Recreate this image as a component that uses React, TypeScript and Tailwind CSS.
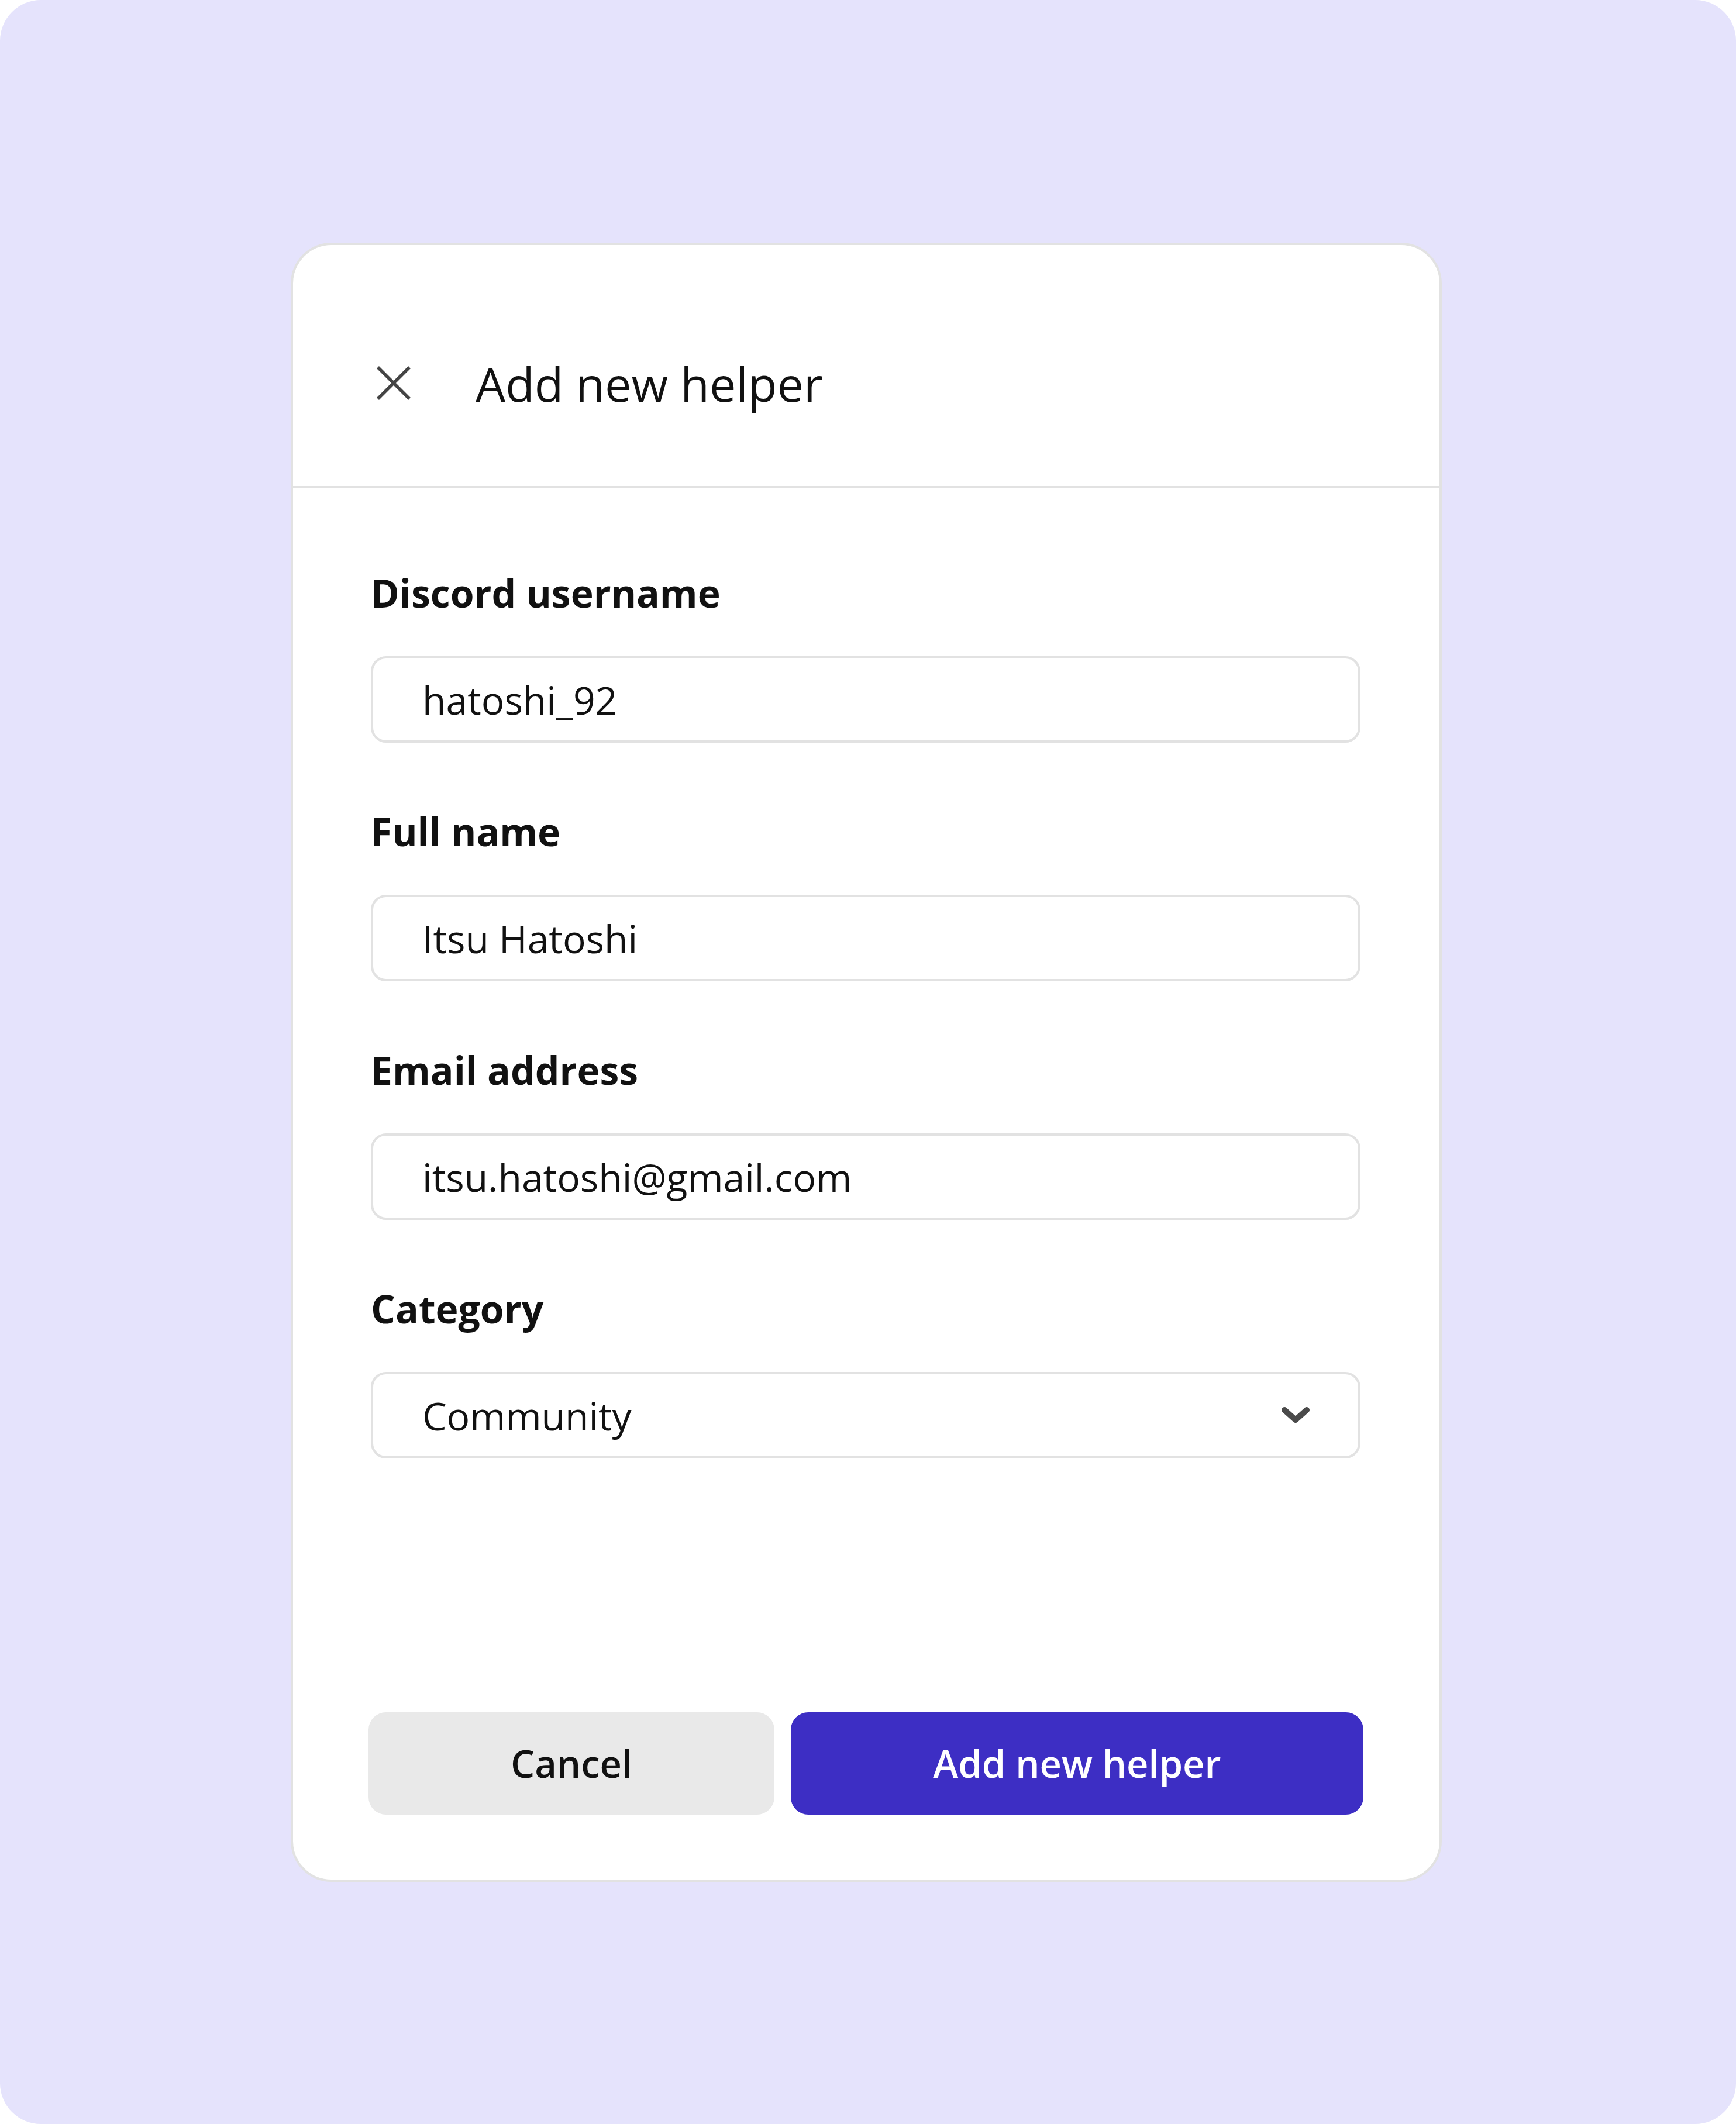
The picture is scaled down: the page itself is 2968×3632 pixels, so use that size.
import React from 'react';

const fields = [
  { label: 'Discord username', value: 'hatoshi_92' },
  { label: 'Full name', value: 'Itsu Hatoshi' },
  { label: 'Email address', value: 'itsu.hatoshi@gmail.com' },
];

const CloseIcon = () => (
  <svg width="58" height="58" viewBox="0 0 58 58" fill="none">
    <path d="M2 2 L56 56 M56 2 L2 56" stroke="#444444" strokeWidth="5.5" />
  </svg>
);

const ChevronDown = () => (
  <svg width="50" height="30" viewBox="0 0 50 30" fill="none">
    <path d="M6 6 L25 23 L44 6" stroke="#4a4a4a" strokeWidth="10" strokeLinecap="round" strokeLinejoin="round" />
  </svg>
);

const Field = ({ label, children }: { label: string; children: React.ReactNode }) => (
  <div className="flex flex-col">
    <label className="text-[66px] leading-[70px] font-bold text-[#111111]">{label}</label>
    <div className="mt-[74px] h-[148px] w-[1692px] rounded-[26px] border-4 border-[#e2e2e2] bg-white flex items-center pl-[84px] pr-[82px] text-[66px] text-[#111111]">
      {children}
    </div>
  </div>
);

const App = () => {
  return (
    <div className="w-[2968px] h-[3632px] bg-white" style={{ fontFamily: '"Open Sans", "Noto Sans", sans-serif' }}>
      <div className="w-full h-full rounded-[70px] bg-[#e5e3fc] flex pl-[497px] pt-[415px]">
        <div className="w-[1968px] h-[2803px] rounded-[70px] border-4 border-[#e2e2e2] bg-white flex flex-col">
          <div className="h-[416px] shrink-0 border-b-4 border-[#e2e2e2] flex items-center pl-[143px] pt-[60px]">
            <CloseIcon />
            <h1 className="ml-[111px] text-[81px] leading-none font-normal text-[#111111]">Add new helper</h1>
          </div>

          <div className="flex-1 flex flex-col pl-[133px] pt-[143px] pb-[111px]">
            <div className="flex flex-col gap-[116px]">
              {fields.map((f) => (
                <Field key={f.label} label={f.label}>
                  <span>{f.value}</span>
                </Field>
              ))}
              <Field label="Category">
                <span className="flex-1">Community</span>
                <ChevronDown />
              </Field>
            </div>

            <div className="mt-auto -ml-[4px] w-[1701px] flex gap-[28px]">
              <button className="w-[694px] h-[175px] rounded-[30px] bg-[#e9e9e9] text-[65px] font-semibold text-[#111111]">
                Cancel
              </button>
              <button className="flex-1 h-[175px] rounded-[30px] bg-[#3d2ec4] text-[65px] font-semibold text-white">
                Add new helper
              </button>
            </div>
          </div>
        </div>
      </div>
    </div>
  );
};

export default App;
